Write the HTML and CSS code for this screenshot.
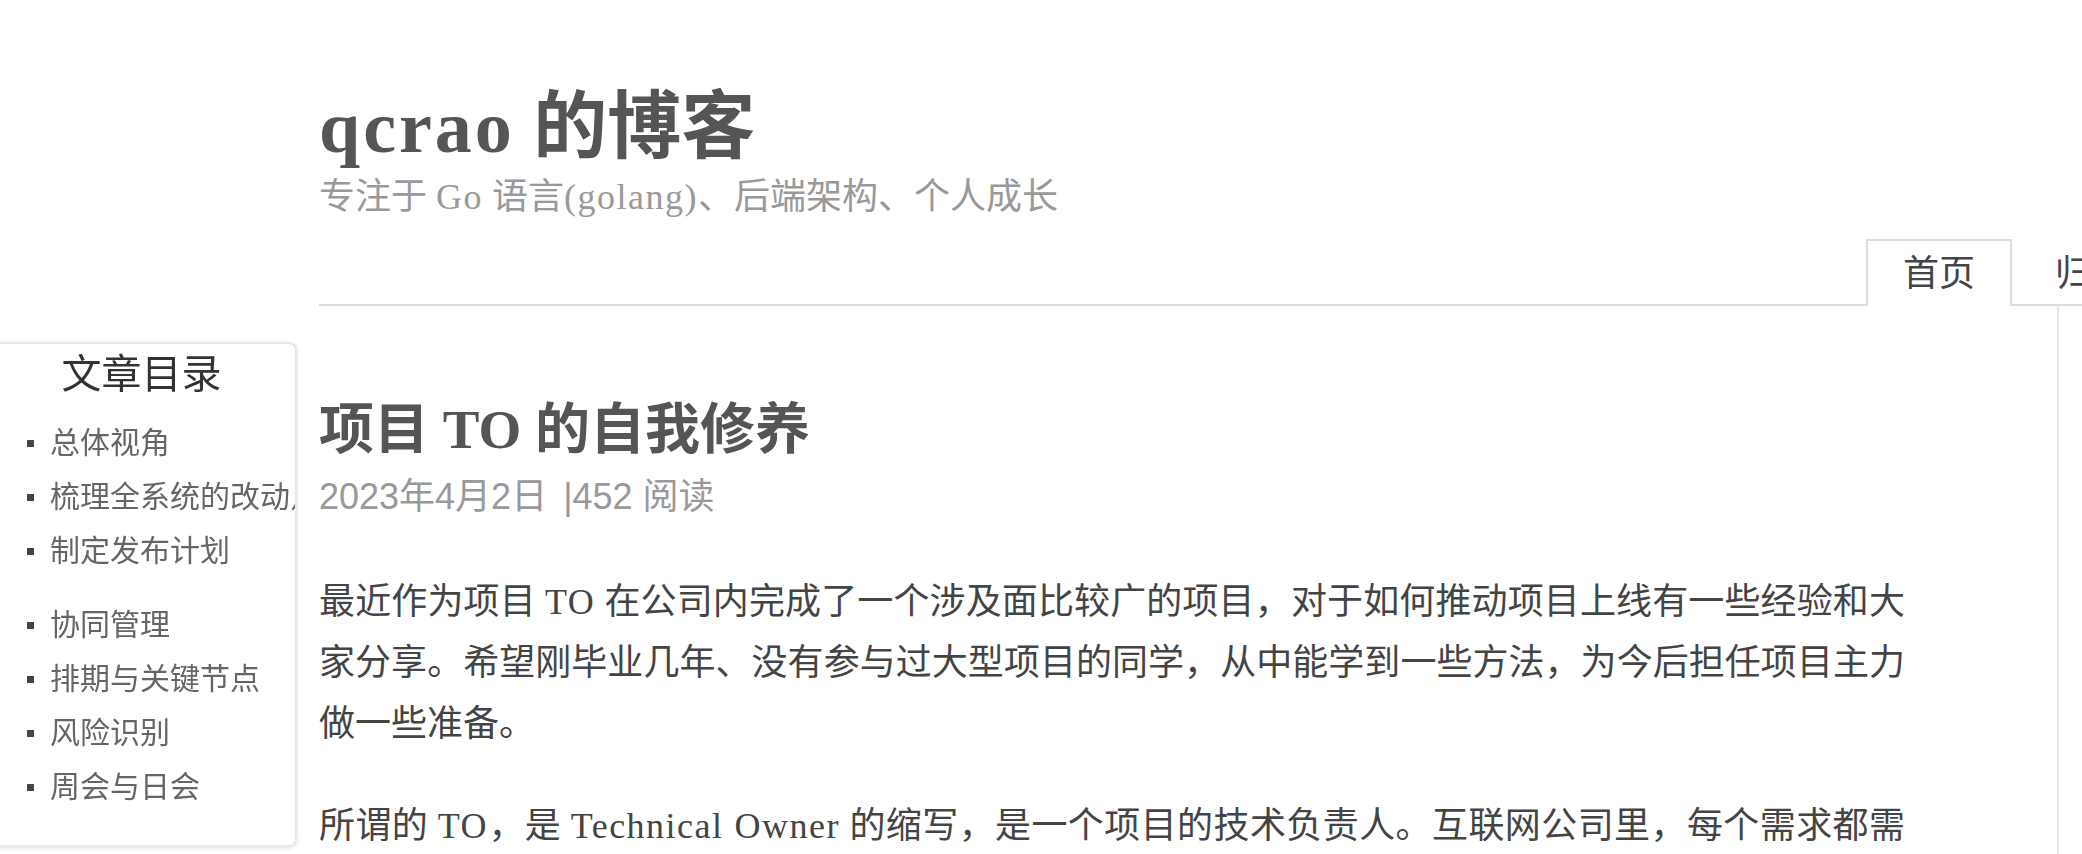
FILE: index.html
```html
<!DOCTYPE html>
<html lang="zh-CN">
<head>
<meta charset="utf-8">
<title>项目 TO 的自我修养 | qcrao 的博客</title>
<link rel="stylesheet" href="styles.css">
</head>
<body>
<div class="page">
  <header class="site-header">
    <h1 class="site-title"><span class="title-latin">qcrao</span> 的博客</h1>
    <p class="site-desc">专注于 <span class="en">Go</span> 语言<span class="en">(golang)</span>、后端架构、个人成长</p>
    <nav class="nav">
      <a class="tab active" href="#">首页</a>
      <a class="tab" href="#">归档</a>
      <a class="tab" href="#">关于</a>
    </nav>
  </header>
  <div class="columns">
    <main class="main">
      <article>
        <h2 class="post-title">项目 TO 的自我修养</h2>
        <div class="post-meta">2023年4月2日 <span class="sep">|</span>452 阅读</div>
        <div class="post-body">
          <p>最近作为项目 <span class="en">TO</span> 在公司内完成了一个涉及面比较广的项目，对于如何推动项目上线有一些经验和大家分享。希望刚毕业几年、没有参与过大型项目的同学，从中能学到一些方法，为今后担任项目主力做一些准备。</p>
          <p>所谓的 <span class="en">TO</span>，是 <span class="en">Technical Owner</span> 的缩写，是一个项目的技术负责人。互联网公司里，每个需求都需要有一个技术负责人，负责技术方案的设计与评审，以及项目整体的推进与落地。</p>
        </div>
      </article>
    </main>
    <aside class="sidebar"></aside>
  </div>
</div>
<div class="toc">
  <div class="toc-title">文章目录</div>
  <ul class="toc-list">
    <li class="toc-item">总体视角</li>
    <li class="toc-item">梳理全系统的改动点</li>
    <li class="toc-item group-end">制定发布计划</li>
    <li class="toc-item">协同管理</li>
    <li class="toc-item">排期与关键节点</li>
    <li class="toc-item">风险识别</li>
    <li class="toc-item">周会与日会</li>
  </ul>
</div>
</body>
</html>
```
FILE: styles.css
```css
html {
  overflow: hidden;
}

body {
  margin: 0;
  background: #fff;
  font-family: "Liberation Serif", "Noto Sans CJK SC", serif;
  color: #444;
}

.page {
  margin-left: 319px;
  width: 1997px;
  padding-top: 83px;
}

.site-title {
  margin: 0;
  font-size: 74px;
  line-height: 88px;
  font-weight: 700;
  color: #555;
}

.title-latin {
  letter-spacing: 3px;
}

.site-desc {
  margin: 0;
  font-size: 36px;
  line-height: 52px;
  color: #999;
}

.en {
  letter-spacing: 1.5px;
}

.nav {
  display: flex;
  justify-content: flex-end;
  gap: 6px;
  margin-top: 16px;
  border-bottom: 2px solid #ddd;
}

.tab {
  font-family: "Liberation Sans", "Noto Sans CJK SC", sans-serif;
  font-size: 36px;
  line-height: 65px;
  padding: 0 35px;
  border: 2px solid transparent;
  border-bottom: 0;
  margin-bottom: -2px;
  color: #444;
  text-decoration: none;
}

.tab.active {
  border-color: #ddd;
  background: #fff;
}

.columns {
  display: grid;
  grid-template-columns: 1586px 1fr;
  column-gap: 152px;
}

.main {
  padding-top: 88px;
}

.sidebar {
  border-left: 2px solid #e6e6e6;
  min-height: 700px;
}

.post-title {
  margin: 0;
  font-size: 55px;
  line-height: 72px;
  font-weight: 700;
  color: #555;
}

.post-meta {
  font-family: "Liberation Sans", "Noto Sans CJK SC", sans-serif;
  font-size: 36px;
  line-height: 61px;
  color: #999;
  margin-bottom: 45px;
}

.sep {
  margin-left: 6px;
}

.post-body p {
  margin: 0 0 40px;
  font-size: 36px;
  line-height: 61.2px;
  text-align: justify;
}

.toc {
  position: fixed;
  left: -14px;
  top: 342px;
  box-sizing: border-box;
  width: 311px;
  background: #fff;
  border: 2px solid #e8e8e8;
  border-radius: 8px;
  box-shadow: 0 1px 4px rgba(0, 0, 0, 0.12);
  overflow: hidden;
  padding-bottom: 31px;
  font-family: "Liberation Sans", "Noto Sans CJK SC", sans-serif;
}

.toc-title {
  font-size: 40px;
  line-height: 60px;
  text-align: center;
  color: #333;
  margin-bottom: 12px;
}

.toc-list {
  list-style: none;
  margin: 0;
  padding: 0 0 0 39px;
}

.toc-item {
  display: flex;
  align-items: center;
  gap: 16px;
  font-size: 30px;
  line-height: 54px;
  color: #666;
  white-space: nowrap;
}

.toc-item::before {
  content: "";
  flex: none;
  width: 7px;
  height: 7px;
  background: #444;
}

.toc-item.group-end {
  margin-bottom: 20px;
}
```
